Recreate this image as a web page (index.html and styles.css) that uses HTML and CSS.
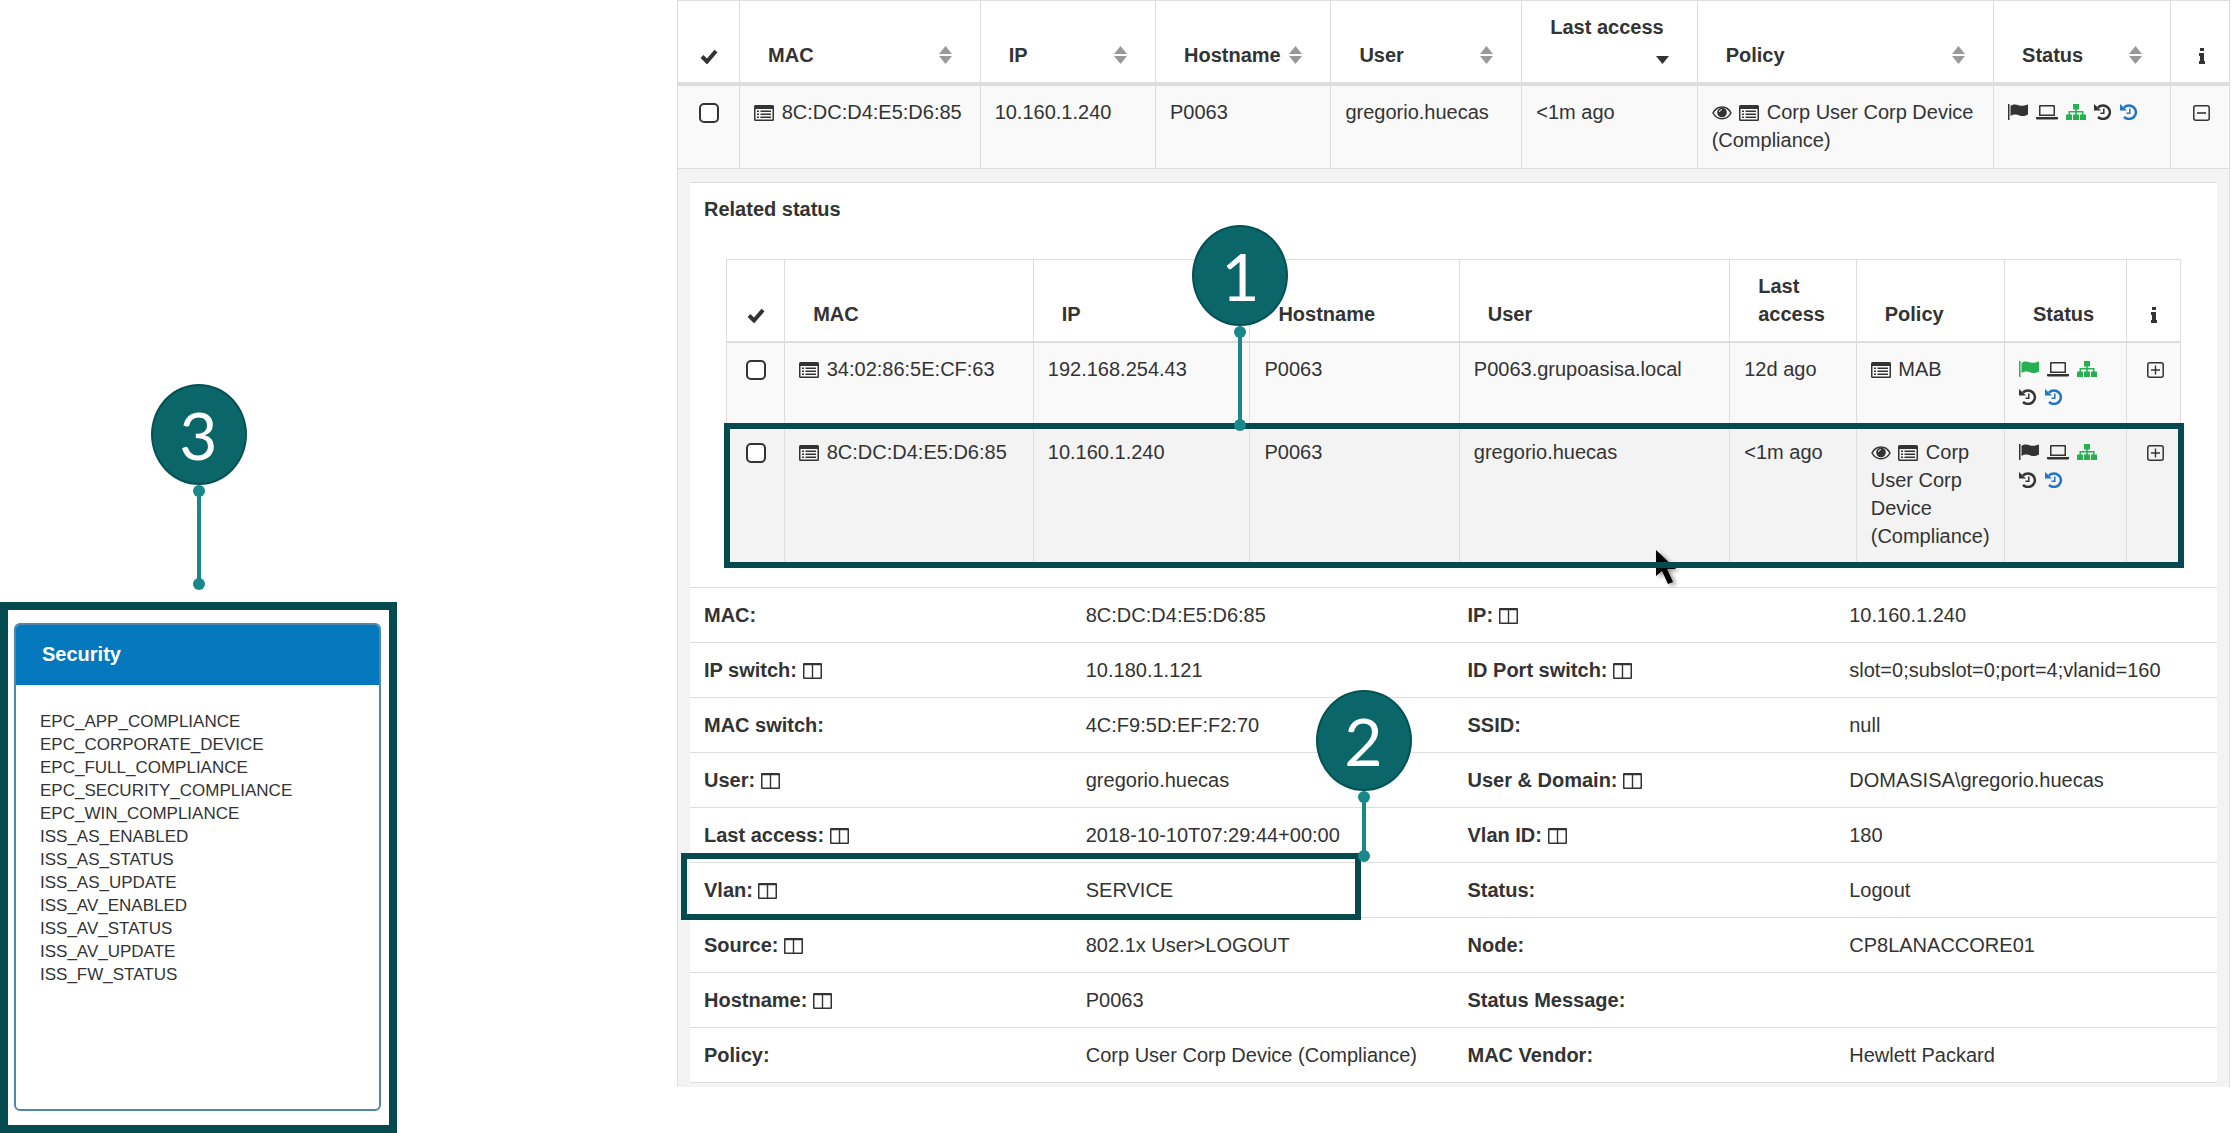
FILE: index.html
```html
<!DOCTYPE html>
<html lang="en">
<head>
    <meta charset="UTF-8">
    <meta name="viewport" content="width=device-width, initial-scale=1.0">
    <title>Related status</title>
    <link rel="stylesheet" href="styles.css">
</head>
<body>
    <!-- icon set -->
    <svg class="sprite" aria-hidden="true">
        <symbol id="i-check" viewBox="0 0 18 16"><path d="M2 8.500l5 5L16 3" fill="none" stroke="currentColor" stroke-width="4"/></symbol>
        <symbol id="i-info" viewBox="0 0 8 16"><path d="M2 0h4v3H2zM1 5h5v8h1v3H1v-3h1V8H1z"/></symbol>
        <symbol id="i-sort" viewBox="0 0 13 18"><path d="M6.500 0L13 8H0zM0 10h13l-6.500 8z"/></symbol>
        <symbol id="i-sort-down" viewBox="0 0 13 18"><path d="M0 10h13l-6.500 8z"/></symbol>
        <symbol id="i-list" viewBox="0 0 20 16"><path fill-rule="evenodd" d="M1.500 0h17A1.500 1.500 0 0 1 20 1.500v13a1.500 1.500 0 0 1-1.500 1.500h-17A1.500 1.500 0 0 1 0 14.500v-13A1.500 1.500 0 0 1 1.500 0zM1.500 4v10.500h17V4zM3 5.500h2V7H3zM6.500 5.500h10.500V7H6.500zM3 8.500h2V10H3zM6.500 8.500h10.500V10H6.500zM3 11.500h2V13H3zM6.500 11.500h10.500V13H6.500z"/></symbol>
        <symbol id="i-eye" viewBox="0 0 20 16"><path d="M1 8c4-8 14-8 18 0-4 7.500-14 7.500-18 0z" fill="none" stroke="currentColor" stroke-width="1.500"/><circle cx="10" cy="7.500" r="4.800"/><path d="M7.500 7A2.500 2.500 0 0 1 10 4.500" fill="none" stroke="#fff"/></symbol>
        <symbol id="i-flag" viewBox="0 0 20 16"><path d="M0 0h1.500v16H0zM2.500 1.800c3-1.800 5.500-1.500 8-.6s5 .8 9.500-.7v10c-4 2.200-6.500 1.800-9 .7s-5.500-1-8.500.8z"/></symbol>
        <symbol id="i-laptop" viewBox="0 0 22 16"><path fill-rule="evenodd" d="M4 1h14a1 1 0 0 1 1 1v10H3V2a1 1 0 0 1 1-1zM4.500 2.500v8h13v-8zM0 13h22v1.500c0 .6-.8 1-1.500 1h-19c-.7 0-1.500-.4-1.500-1z"/></symbol>
        <symbol id="i-sitemap" viewBox="0 0 20 16"><path d="M7 0h6v5.500h-2.200V7h6.700v3.500H20V16h-6v-5.500h2V8.500h-5.200v2H13V16H7v-5.500h2.200v-2H4v2h2V16H0v-5.500h2.500V7h6.700V5.500H7z"/></symbol>
        <symbol id="i-history" viewBox="0 0 18 16"><path d="M4 3.500A7 6.700 0 1 1 4 13" fill="none" stroke="currentColor" stroke-width="2.500"/><path d="M0 0l7 6.500H0z"/><path d="M9.800 4.500v4.700H6.500" fill="none" stroke="currentColor" stroke-width="1.500"/></symbol>
        <symbol id="i-minus" viewBox="0 0 17 16"><rect x=".8" y=".8" width="15.400" height="14.400" rx="2" fill="none" stroke="currentColor" stroke-width="1.500"/><path d="M4 7.200h9v1.600H4z"/></symbol>
        <symbol id="i-plus" viewBox="0 0 17 16"><rect x=".8" y=".8" width="15.400" height="14.400" rx="2" fill="none" stroke="currentColor" stroke-width="1.500"/><path d="M4 7.200h3.800V3.500h1.400v3.700H13v1.600H9.200v3.700H7.800V8.800H4z"/></symbol>
        <symbol id="i-columns" viewBox="0 0 19 16"><path fill-rule="evenodd" d="M1 0h17a1 1 0 0 1 1 1v14a1 1 0 0 1-1 1H1a1 1 0 0 1-1-1V1a1 1 0 0 1 1-1zM1.500 2.300v12.200h7.300V2.300zM10.200 2.300v12.200h7.300V2.300z"/></symbol>
        <symbol id="i-cursor" viewBox="0 0 22 34"><path d="M0 0v26l6-5 6 13 5-2-6-13h9z"/></symbol>
    </svg>

    <div class="page">
        <aside class="side">
            <div class="callout callout-side">
                <span class="bubble">3</span>
                <span class="stem stem-long"></span>
            </div>
            <div class="frame">
                <section class="card">
                    <h2 class="card-title">Security</h2>
                    <ul class="tags">
                        <li>EPC_APP_COMPLIANCE</li>
                        <li>EPC_CORPORATE_DEVICE</li>
                        <li>EPC_FULL_COMPLIANCE</li>
                        <li>EPC_SECURITY_COMPLIANCE</li>
                        <li>EPC_WIN_COMPLIANCE</li>
                        <li>ISS_AS_ENABLED</li>
                        <li>ISS_AS_STATUS</li>
                        <li>ISS_AS_UPDATE</li>
                        <li>ISS_AV_ENABLED</li>
                        <li>ISS_AV_STATUS</li>
                        <li>ISS_AV_UPDATE</li>
                        <li>ISS_FW_STATUS</li>
                    </ul>
                </section>
            </div>
        </aside>

        <main class="main">
            <table class="grid devices">
                <colgroup>
                    <col class="w-check"><col class="w-mac"><col class="w-ip"><col class="w-host"><col class="w-user"><col class="w-access"><col class="w-policy"><col class="w-status"><col class="w-info">
                </colgroup>
                <thead>
                    <tr>
                        <th class="center"><svg class="icon check"><use href="#i-check"/></svg></th>
                        <th><button class="sort">MAC <svg class="arrows"><use href="#i-sort"/></svg></button></th>
                        <th><button class="sort">IP <svg class="arrows"><use href="#i-sort"/></svg></button></th>
                        <th><button class="sort">Hostname <svg class="arrows"><use href="#i-sort"/></svg></button></th>
                        <th><button class="sort">User <svg class="arrows"><use href="#i-sort"/></svg></button></th>
                        <th><button class="sort">Last access <svg class="arrows active"><use href="#i-sort-down"/></svg></button></th>
                        <th><button class="sort">Policy <svg class="arrows"><use href="#i-sort"/></svg></button></th>
                        <th><button class="sort">Status <svg class="arrows"><use href="#i-sort"/></svg></button></th>
                        <th class="center toggle"><svg class="icon info"><use href="#i-info"/></svg></th>
                    </tr>
                </thead>
                <tbody>
                    <tr class="row">
                        <td class="center"><input type="checkbox" aria-label="Select 8C:DC:D4:E5:D6:85"></td>
                        <td><svg class="icon"><use href="#i-list"/></svg> 8C:DC:D4:E5:D6:85</td>
                        <td>10.160.1.240</td>
                        <td>P0063</td>
                        <td>gregorio.huecas</td>
                        <td>&lt;1m ago</td>
                        <td><svg class="icon"><use href="#i-eye"/></svg> <svg class="icon"><use href="#i-list"/></svg> Corp User Corp Device (Compliance)</td>
                        <td>
                            <div class="states">
                                <svg class="icon"><use href="#i-flag"/></svg>
                                <svg class="icon laptop"><use href="#i-laptop"/></svg>
                                <svg class="icon green"><use href="#i-sitemap"/></svg>
                                <svg class="icon history"><use href="#i-history"/></svg>
                                <svg class="icon history blue"><use href="#i-history"/></svg>
                            </div>
                        </td>
                        <td class="center toggle"><button class="expand" aria-label="Collapse"><svg class="icon box"><use href="#i-minus"/></svg></button></td>
                    </tr>
                    <tr>
                        <td class="detail" colspan="9">
                            <div class="panel">
                                <div class="related">
                                    <h3>Related status</h3>
                                    <table class="grid sessions">
                                        <colgroup>
                                            <col class="w-check"><col class="w-mac"><col class="w-ip"><col class="w-host"><col class="w-user"><col class="w-access"><col class="w-policy"><col class="w-status"><col class="w-info">
                                        </colgroup>
                                        <thead>
                                            <tr>
                                                <th class="center"><svg class="icon check"><use href="#i-check"/></svg></th>
                                                <th>MAC</th>
                                                <th>IP</th>
                                                <th>Hostname</th>
                                                <th>User</th>
                                                <th>Last access</th>
                                                <th>Policy</th>
                                                <th>Status</th>
                                                <th class="center"><svg class="icon info"><use href="#i-info"/></svg></th>
                                            </tr>
                                        </thead>
                                        <tbody>
                                            <tr class="row">
                                                <td class="center"><input type="checkbox" aria-label="Select 34:02:86:5E:CF:63"></td>
                                                <td><svg class="icon"><use href="#i-list"/></svg> 34:02:86:5E:CF:63</td>
                                                <td>192.168.254.43</td>
                                                <td>P0063</td>
                                                <td>P0063.grupoasisa.local</td>
                                                <td>12d ago</td>
                                                <td><svg class="icon"><use href="#i-list"/></svg> MAB</td>
                                                <td>
                                                    <div class="states">
                                                        <svg class="icon green"><use href="#i-flag"/></svg>
                                                        <svg class="icon laptop"><use href="#i-laptop"/></svg>
                                                        <svg class="icon green"><use href="#i-sitemap"/></svg>
                                                        <svg class="icon history"><use href="#i-history"/></svg>
                                                        <svg class="icon history blue"><use href="#i-history"/></svg>
                                                    </div>
                                                </td>
                                                <td class="center toggle"><button class="expand" aria-label="Expand"><svg class="icon box"><use href="#i-plus"/></svg></button></td>
                                            </tr>
                                            <tr class="row current">
                                                <td class="center"><input type="checkbox" aria-label="Select 8C:DC:D4:E5:D6:85"></td>
                                                <td><svg class="icon"><use href="#i-list"/></svg> 8C:DC:D4:E5:D6:85</td>
                                                <td>10.160.1.240</td>
                                                <td class="anchor">P0063
                                                    <div class="callout callout-row">
                                                        <span class="bubble">1</span>
                                                        <span class="stem stem-long"></span>
                                                    </div>
                                                </td>
                                                <td class="anchor">gregorio.huecas<svg class="cursor"><use href="#i-cursor"/></svg></td>
                                                <td>&lt;1m ago</td>
                                                <td><svg class="icon"><use href="#i-eye"/></svg> <svg class="icon"><use href="#i-list"/></svg> Corp User Corp Device (Compliance)</td>
                                                <td>
                                                    <div class="states">
                                                        <svg class="icon"><use href="#i-flag"/></svg>
                                                        <svg class="icon laptop"><use href="#i-laptop"/></svg>
                                                        <svg class="icon green"><use href="#i-sitemap"/></svg>
                                                        <svg class="icon history"><use href="#i-history"/></svg>
                                                        <svg class="icon history blue"><use href="#i-history"/></svg>
                                                    </div>
                                                </td>
                                                <td class="center toggle"><button class="expand" aria-label="Expand"><svg class="icon box"><use href="#i-plus"/></svg></button></td>
                                            </tr>
                                        </tbody>
                                    </table>
                                </div>

                                <table class="props">
                                    <tbody>
                                        <tr>
                                            <th scope="row">MAC:</th><td>8C:DC:D4:E5:D6:85</td>
                                            <th scope="row">IP: <svg class="icon cols"><use href="#i-columns"/></svg></th><td>10.160.1.240</td>
                                        </tr>
                                        <tr>
                                            <th scope="row">IP switch: <svg class="icon cols"><use href="#i-columns"/></svg></th><td>10.180.1.121</td>
                                            <th scope="row">ID Port switch: <svg class="icon cols"><use href="#i-columns"/></svg></th><td>slot=0;subslot=0;port=4;vlanid=160</td>
                                        </tr>
                                        <tr>
                                            <th scope="row">MAC switch:</th><td>4C:F9:5D:EF:F2:70</td>
                                            <th scope="row">SSID:</th><td>null</td>
                                        </tr>
                                        <tr>
                                            <th scope="row">User: <svg class="icon cols"><use href="#i-columns"/></svg></th><td>gregorio.huecas</td>
                                            <th scope="row">User &amp; Domain: <svg class="icon cols"><use href="#i-columns"/></svg></th><td>DOMASISA\gregorio.huecas</td>
                                        </tr>
                                        <tr>
                                            <th scope="row">Last access: <svg class="icon cols"><use href="#i-columns"/></svg></th><td>2018-10-10T07:29:44+00:00</td>
                                            <th scope="row">Vlan ID: <svg class="icon cols"><use href="#i-columns"/></svg></th><td>180</td>
                                        </tr>
                                        <tr>
                                            <th scope="row" class="anchor">Vlan: <svg class="icon cols"><use href="#i-columns"/></svg>
                                                <div class="marker">
                                                    <div class="callout callout-vlan">
                                                        <span class="bubble">2</span>
                                                        <span class="stem stem-short"></span>
                                                    </div>
                                                </div>
                                            </th><td>SERVICE</td>
                                            <th scope="row">Status:</th><td>Logout</td>
                                        </tr>
                                        <tr>
                                            <th scope="row">Source: <svg class="icon cols"><use href="#i-columns"/></svg></th><td>802.1x User&gt;LOGOUT</td>
                                            <th scope="row">Node:</th><td>CP8LANACCORE01</td>
                                        </tr>
                                        <tr>
                                            <th scope="row">Hostname: <svg class="icon cols"><use href="#i-columns"/></svg></th><td>P0063</td>
                                            <th scope="row">Status Message:</th><td></td>
                                        </tr>
                                        <tr>
                                            <th scope="row">Policy:</th><td>Corp User Corp Device (Compliance)</td>
                                            <th scope="row">MAC Vendor:</th><td>Hewlett Packard</td>
                                        </tr>
                                    </tbody>
                                </table>
                            </div>
                        </td>
                    </tr>
                </tbody>
            </table>
        </main>
    </div>
</body>
</html>
```
FILE: styles.css
```css
* {
    box-sizing: border-box;
}
body {
    margin: 0;
    background: #fff;
    color: #333;
    font-family: "Liberation Sans", Arial, sans-serif;
    font-size: 20px;
    line-height: 28px;
}
h2, h3, ul {
    margin: 0;
    padding: 0;
}
h2, h3 {
    font-size: 20px;
}
button {
    padding: 0;
    border: none;
    background: none;
    color: inherit;
    font: inherit;
    cursor: pointer;
}
.sprite {
    display: none;
}
.page {
    display: flex;
    align-items: flex-start;
    gap: 280px;
    min-height: 100vh;
}

/* security card */
.side {
    display: flex;
    flex-direction: column;
    align-self: stretch;
    justify-content: flex-end;
    flex: 0 0 397px;
}
.frame {
    padding: 13px 8px 14px 6px;
    border: 8px solid #044a4e;
}
.card {
    min-height: 488px;
    border: 2px solid #4f86ab;
    border-radius: 6px;
    overflow: hidden;
}
.card-title {
    margin: -2px -2px 0;
    padding: 17px 28px;
    background: #0478bd;
    color: #fff;
}
.tags {
    padding: 25px 24px;
    list-style: none;
    font-size: 17px;
    line-height: 23px;
}

/* tables */
.main {
    flex: 1;
    min-width: 0;
    padding-right: 4px;
}
table {
    width: 100%;
    border-collapse: separate;
    border-spacing: 0;
    table-layout: fixed;
}
th, td {
    padding: 12px 14px 14px;
    text-align: left;
    vertical-align: top;
}
.grid {
    border-top: 1px solid #ddd;
    border-left: 1px solid #ddd;
}
.grid > * > tr > th, .grid > * > tr > td {
    border-right: 1px solid #ddd;
    border-bottom: 1px solid #ddd;
}
.grid > thead > tr > th {
    padding: 12px 28px 13px;
    vertical-align: bottom;
}
.devices > thead > tr > th {
    border-bottom: 4px solid #ddd;
}
.sessions > thead > tr > th {
    border-bottom: 2px solid #ddd;
    padding-right: 8px;
}
.grid > * > tr > .center {
    padding-right: 0;
    padding-left: 0;
    text-align: center;
}
.grid > * > tr > .toggle {
    padding-left: 4px;
}
.row {
    background: #f9f9f9;
}
.devices .w-check { width: 4%; }
.devices .w-mac { width: 15.5%; }
.devices .w-ip { width: 11.3%; }
.devices .w-host { width: 11.3%; }
.devices .w-user { width: 12.3%; }
.devices .w-access { width: 11.3%; }
.devices .w-policy { width: 19.1%; }
.devices .w-status { width: 11.4%; }
.devices .w-info { width: 3.8%; }
.sessions .w-check { width: 4%; }
.sessions .w-mac { width: 17.1%; }
.sessions .w-ip { width: 14.9%; }
.sessions .w-host { width: 14.4%; }
.sessions .w-user { width: 18.6%; }
.sessions .w-access { width: 8.7%; }
.sessions .w-policy { width: 10.2%; }
.sessions .w-status { width: 8.4%; }
.sessions .w-info { width: 3.7%; }
.sort {
    display: flex;
    flex-wrap: wrap;
    align-items: center;
    width: 100%;
    font-weight: bold;
}
.arrows {
    width: 13px;
    height: 18px;
    margin: 5px 0 5px auto;
    fill: #999;
}
.arrows.active {
    fill: #333;
}
input[type="checkbox"] {
    appearance: none;
    width: 20px;
    height: 20px;
    margin: 0;
    border: 2px solid #333;
    border-radius: 5px;
    background: #fff;
    vertical-align: -4px;
}

/* icons */
.icon {
    width: 20px;
    height: 16px;
    margin-right: 2px;
    color: #333;
    fill: currentColor;
    vertical-align: -2px;
}
.icon.check {
    width: 18px;
    margin: 0;
}
.icon.info {
    width: 8px;
    margin: 0;
}
.icon.box {
    width: 17px;
    margin: 0;
}
.icon.laptop {
    width: 22px;
}
.icon.history {
    width: 18px;
}
.icon.cols {
    width: 19px;
}
.icon.green {
    color: #27b04f;
}
.icon.blue {
    color: #2274c4;
}
.states {
    display: flex;
    flex-wrap: wrap;
    column-gap: 8px;
}
.states .icon {
    margin: 6px 0;
}

/* expanded row */
.devices > tbody > tr > .detail {
    padding: 13px 12px 4px;
    border-bottom: none;
    background: #f3f3f3;
}
.panel {
    border-top: 1px solid #ddd;
    background: #fff;
}
.related {
    padding: 12px 36px 22px;
}
.related h3 {
    margin: 0 -22px 36px;
}
.sessions .current {
    position: relative;
    background: #f3f3f3;
}
/* frame over the current session */
.sessions .current::after {
    content: "";
    position: absolute;
    inset: -3px;
    border: 6px solid #044a4e;
}
.props th, .props td {
    padding: 13px 14px;
    border-top: 1px solid #ddd;
}
.props tr:last-child th, .props tr:last-child td {
    border-bottom: 1px solid #ddd;
}
.anchor {
    position: relative;
}
.marker {
    position: absolute;
    top: -10px;
    left: -9px;
    width: calc(200% - 84px);
    height: 67px;
    border: 6px solid #044a4e;
}
.cursor {
    position: absolute;
    bottom: -20px;
    left: 196px;
    width: 22px;
    height: 34px;
    filter: drop-shadow(3px 2px 2px #999);
}

/* numbered callouts */
.callout {
    display: flex;
    flex-direction: column;
    align-items: center;
    width: 96px;
}
.callout-side {
    align-self: center;
    margin-bottom: 12px;
}
.callout-row {
    position: absolute;
    bottom: calc(100% - 5px);
    left: -58px;
    z-index: 2;
}
.callout-vlan {
    position: absolute;
    right: -57px;
    bottom: 52px;
}
.bubble {
    width: 96px;
    height: 101px;
    border: 2px solid #045155;
    border-radius: 50%;
    background: #0b666a;
    color: #fff;
    font-family: Lato, sans-serif;
    font-size: 66px;
    font-weight: normal;
    line-height: 98px;
    text-align: center;
}
.stem {
    display: flex;
    flex-direction: column;
    align-items: center;
    justify-content: space-between;
    width: 12px;
    background: linear-gradient(#19888a, #19888a) center / 4px 90% no-repeat;
}
.stem::before, .stem::after {
    content: "";
    width: 12px;
    height: 12px;
    border-radius: 50%;
    background: #19888a;
}
.stem-long {
    height: 105px;
}
.stem-short {
    height: 71px;
}
```
